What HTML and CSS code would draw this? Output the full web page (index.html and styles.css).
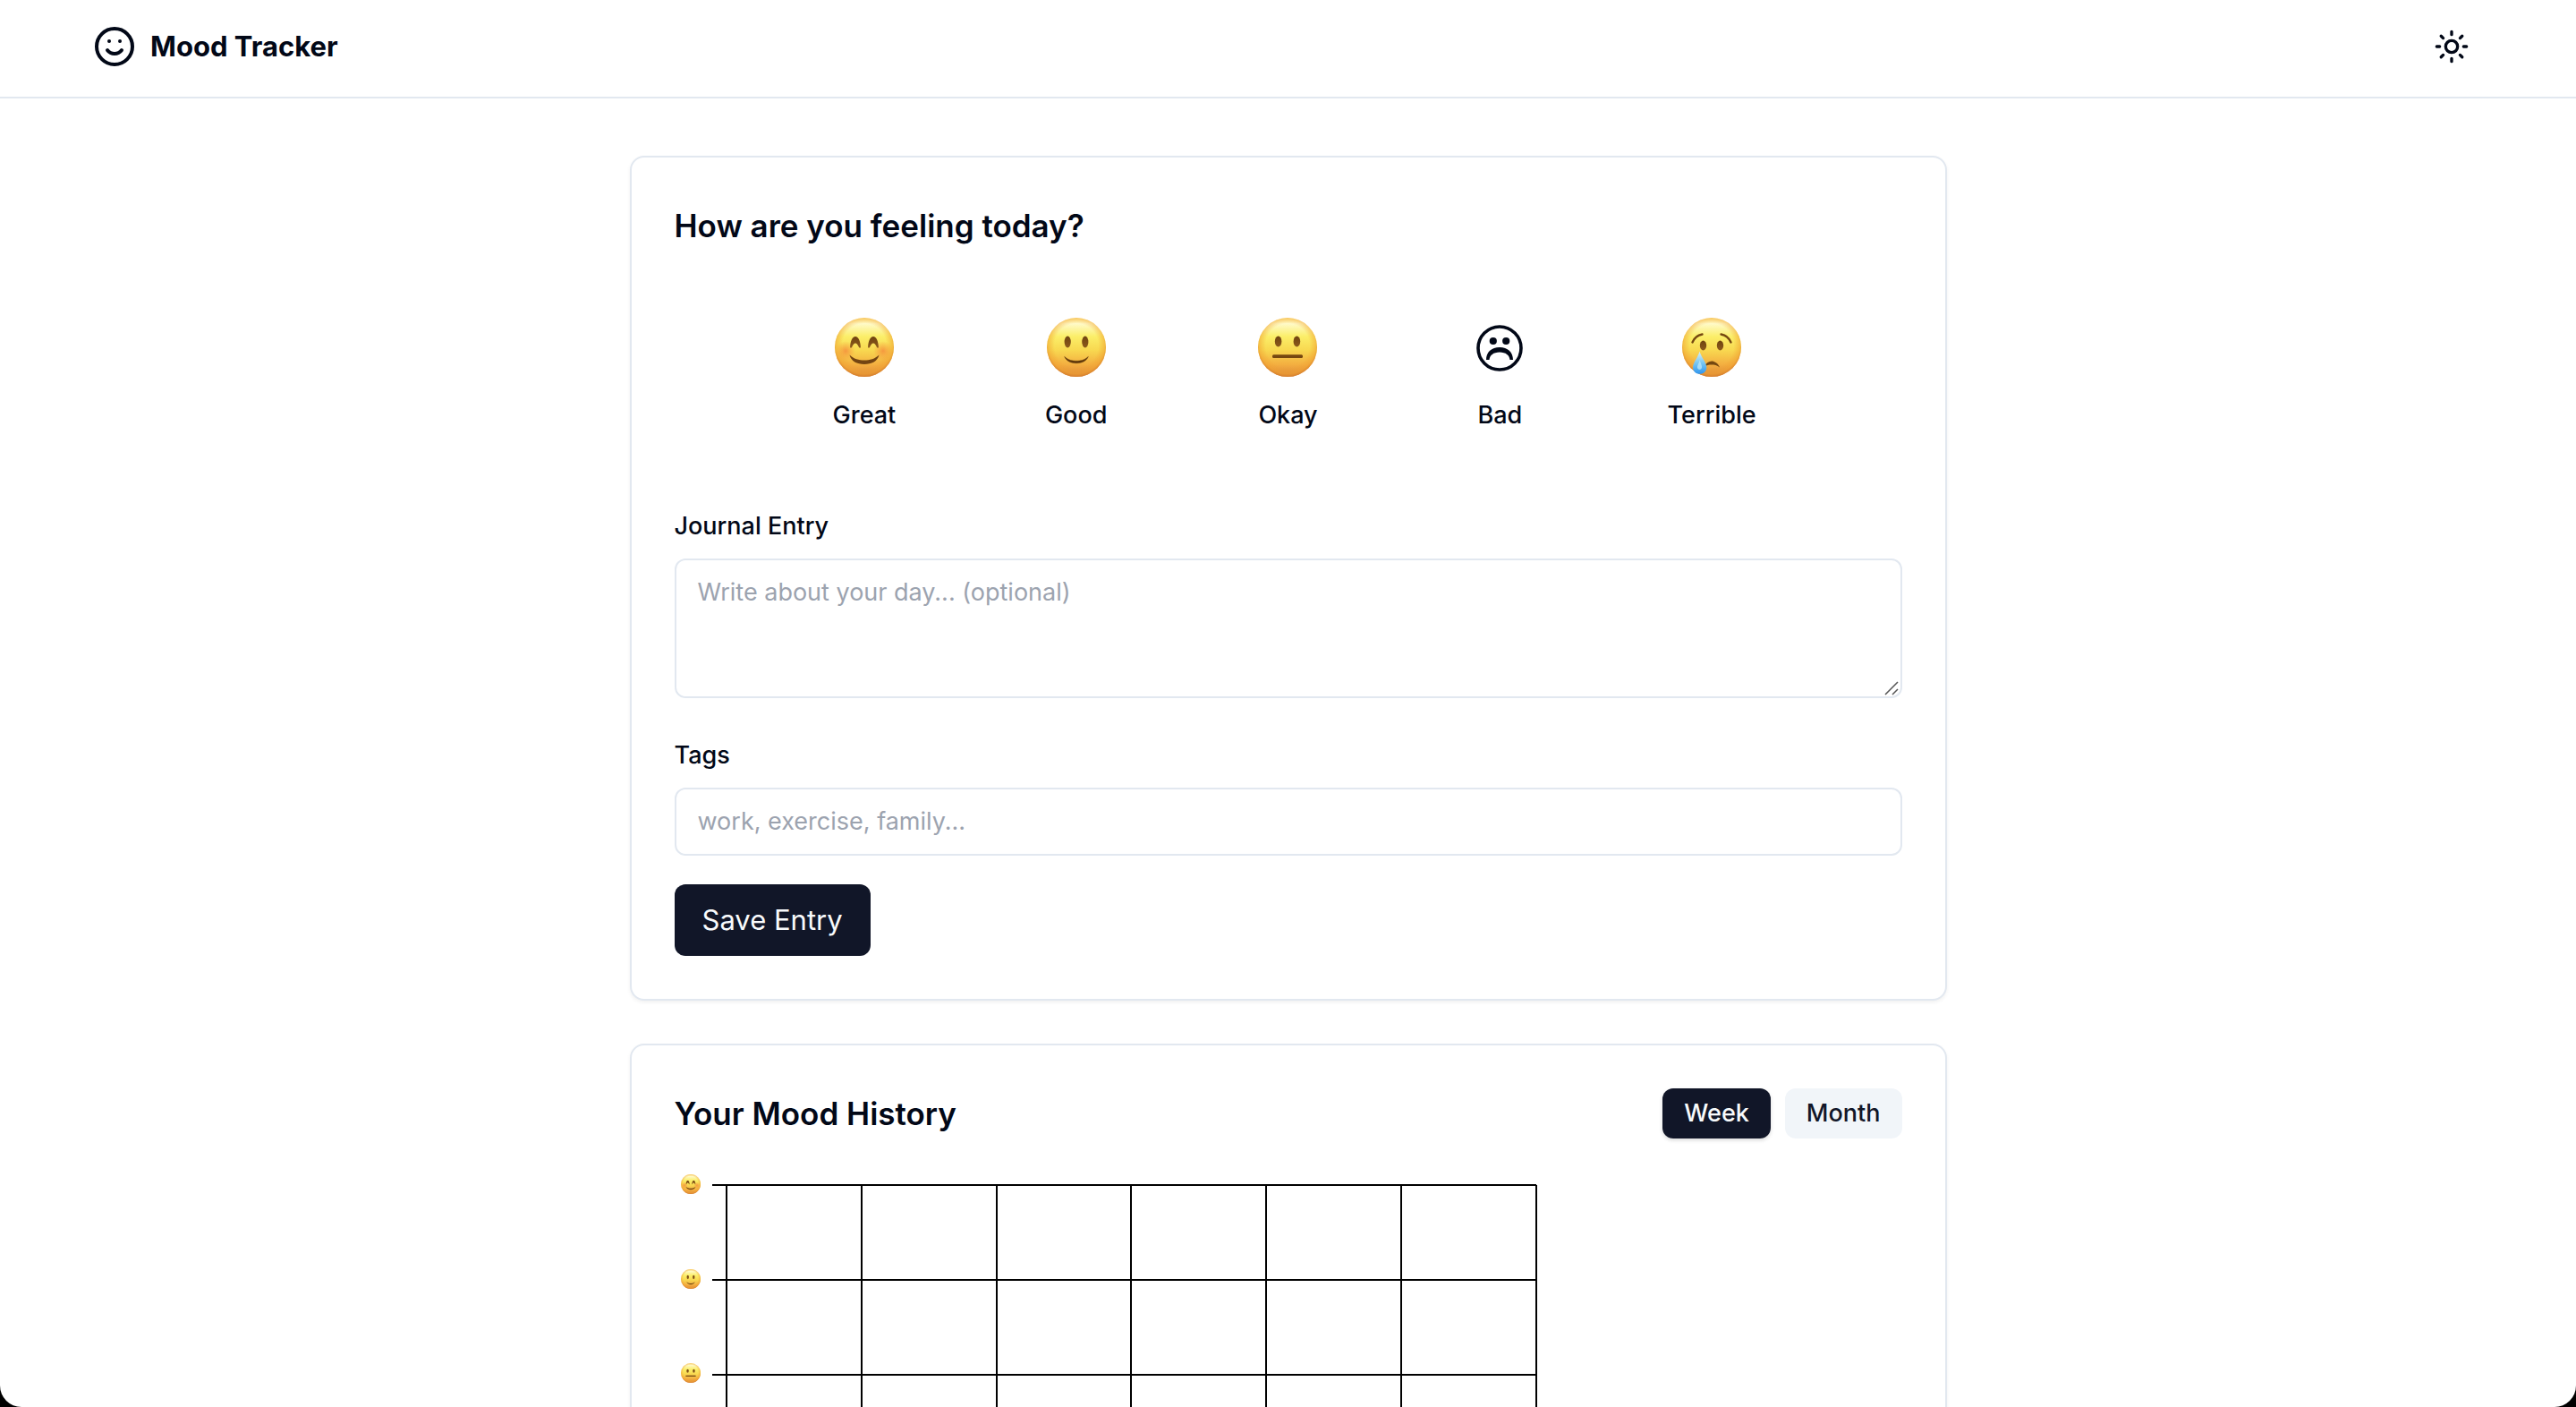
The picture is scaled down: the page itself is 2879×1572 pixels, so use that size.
FILE: index.html
```html
<!DOCTYPE html>
<html lang="en">
<head>
<meta charset="utf-8">
<meta name="viewport" content="width=device-width, initial-scale=1">
<title>Mood Tracker</title>
<link rel="stylesheet" href="styles.css">
</head>
<body>
<!-- Shared mood faces -->
<svg class="sprite" aria-hidden="true">
  <defs>
    <linearGradient id="skin" x1="0" y1="0" x2="0" y2="1">
      <stop offset="0" stop-color="#ffe98a"/>
      <stop offset=".1" stop-color="#fffac8"/>
      <stop offset=".32" stop-color="#fbee68"/>
      <stop offset=".55" stop-color="#f8d850"/>
      <stop offset=".8" stop-color="#f3ad40"/>
      <stop offset="1" stop-color="#d88438"/>
    </linearGradient>
    <radialGradient id="rim" cx=".5" cy=".47" r=".53">
      <stop offset=".7" stop-color="#f0a030" stop-opacity="0"/>
      <stop offset=".9" stop-color="#f0a030" stop-opacity=".5"/>
      <stop offset="1" stop-color="#d47c2c" stop-opacity=".9"/>
    </radialGradient>
    <radialGradient id="blush">
      <stop offset="0" stop-color="#f5843a" stop-opacity=".75"/>
      <stop offset="1" stop-color="#f5903a" stop-opacity="0"/>
    </radialGradient>
    <linearGradient id="ink" x1="0" y1="0" x2="0" y2="1">
      <stop offset="0" stop-color="#6f4310"/>
      <stop offset="1" stop-color="#8d5a1c"/>
    </linearGradient>
    <linearGradient id="tear" x1="0" y1="0" x2="0" y2="1">
      <stop offset="0" stop-color="#d8f2fb"/>
      <stop offset=".5" stop-color="#7cc8f2"/>
      <stop offset="1" stop-color="#2f95ee"/>
    </linearGradient>
    <symbol id="head" viewBox="-36 -36 72 72">
      <circle r="33" fill="url(#skin)"/>
      <circle r="33" fill="url(#rim)"/>
    </symbol>
    <symbol id="great" viewBox="-36 -36 72 72">
      <use href="#head" x="-36" y="-36" width="72" height="72"/>
      <circle cx="-21" cy="4" r="11" fill="url(#blush)"/>
      <circle cx="21" cy="4" r="11" fill="url(#blush)"/>
      <path d="M-15.9 0C-15.6-7-13.5-12-10-12S-4.4-7-4.1 0C-4.4 1-5.4 1-6 0-7.4-3-8.4-4.5-10-4.5S-12.6-3-14 0C-14.6 1-15.6 1-15.9 0Z" fill="url(#ink)"/>
      <path d="M4.1 0C4.4-7 6.5-12 10-12S15.6-7 15.9 0C15.6 1 14.6 1 14 0 12.6-3 11.6-4.5 10-4.5S7.4-3 6 0C5.4 1 4.4 1 4.1 0Z" fill="url(#ink)"/>
      <path d="M-16.5 8.5C-12 13-6 14.5 0 14.5S12 13 16.5 8.5C15 15.5 8 19 0 19S-15 15.5-16.5 8.5Z" fill="#734412"/>
    </symbol>
    <symbol id="good" viewBox="-36 -36 72 72">
      <use href="#head" x="-36" y="-36" width="72" height="72"/>
      <ellipse cx="-9.8" cy="-6" rx="3.6" ry="6.5" fill="url(#ink)"/>
      <ellipse cx="9.8" cy="-6" rx="3.6" ry="6.5" fill="url(#ink)"/>
      <path d="M-13.3 10.5C-9 14.5-4.5 15.3 0 15.3S9 14.5 13.3 10.5C11 15.5 6 17.7 0 17.7S-11 15.5-13.3 10.5Z" fill="#5f370b" stroke="#5f370b" stroke-width=".5"/>
    </symbol>
    <symbol id="okay" viewBox="-36 -36 72 72">
      <use href="#head" x="-36" y="-36" width="72" height="72"/>
      <ellipse cx="-10.4" cy="-6.5" rx="3.8" ry="6" fill="url(#ink)"/>
      <ellipse cx="10.4" cy="-6.5" rx="3.8" ry="6" fill="url(#ink)"/>
      <rect x="-17" y="8.3" width="34" height="3.8" rx="1.5" fill="#754710"/>
    </symbol>
    <symbol id="bad" viewBox="-36 -36 72 72">
      <circle cy="1" r="24" fill="none" stroke="currentColor" stroke-width="3.6"/>
      <circle cx="-7.2" cy="-7" r="4.1" fill="currentColor"/>
      <circle cx="7.2" cy="-7" r="4.1" fill="currentColor"/>
      <path d="M-15 14C-15 5.5-9 0 0 0S15 5.5 15 14H11.5C11 9 7 5.5 0 5.5S-11 9-11.5 14Z" fill="currentColor"/>
    </symbol>
    <symbol id="terrible" viewBox="-36 -36 72 72">
      <use href="#head" x="-36" y="-36" width="72" height="72"/>
      <ellipse cx="-9.5" cy="-2" rx="3.7" ry="5.4" fill="url(#ink)"/>
      <ellipse cx="9.5" cy="-2" rx="3.7" ry="5.4" fill="url(#ink)"/>
      <path d="M-21.5-5.5Q-18.5-13-10.5-14.5M21.5-5.5Q18.5-13 10.5-14.5" fill="none" stroke="#754710" stroke-width="2.4" stroke-linecap="round"/>
      <path d="M-9 22C-6 17.5-3 15.5 0 15.5S7 17.5 9 22.5C6 20 3 19.5 0 19.5S-6 20-9 22Z" fill="#754710"/>
      <path d="M-13.5 4.5C-12 10.5-5.7 17-5.7 22.5C-5.7 27-9 29.8-13.3 29.8S-21 27-21 22.5C-21 17-14.8 10.5-13.5 4.5Z" fill="url(#tear)"/>
      <path d="M-13.3 14C-12.5 18-10.5 20-11 23-12 25.5-15 25.5-16 23-16.3 20-14 18-13.3 14Z" fill="#c4ebfa" opacity=".7"/>
    </symbol>
  </defs>
</svg>

<header class="topbar">
  <div class="brand">
    <svg class="brand-icon" viewBox="0 0 24 24" aria-hidden="true"><circle cx="12" cy="12" r="10"/><path d="M8 14s1.5 2 4 2 4-2 4-2M9 9h.01M15 9h.01"/></svg>
    <h1 class="brand-name">Mood Tracker</h1>
  </div>
  <button class="theme-toggle" type="button" aria-label="Toggle theme">
    <svg class="theme-icon" viewBox="0 0 24 24" aria-hidden="true"><circle cx="12" cy="12" r="4"/><path d="M12 2v2M12 20v2M4.930 4.930l1.410 1.410M17.660 17.660l1.410 1.410M2 12h2M20 12h2M6.340 17.660l-1.410 1.410M19.070 4.930l-1.410 1.410"/></svg>
  </button>
</header>

<main class="page">
  <section class="card">
    <h2 class="card-title">How are you feeling today?</h2>
    <form class="entry-form">
      <div class="moods">
        <button class="mood" type="button"><svg class="face" aria-hidden="true"><use href="#great"/></svg>Great</button>
        <button class="mood" type="button"><svg class="face" aria-hidden="true"><use href="#good"/></svg>Good</button>
        <button class="mood" type="button"><svg class="face" aria-hidden="true"><use href="#okay"/></svg>Okay</button>
        <button class="mood" type="button"><svg class="face" aria-hidden="true"><use href="#bad"/></svg>Bad</button>
        <button class="mood" type="button"><svg class="face" aria-hidden="true"><use href="#terrible"/></svg>Terrible</button>
      </div>
      <div class="field">
        <label class="label" for="journal">Journal Entry</label>
        <div class="textarea-wrap">
          <textarea class="control textarea" id="journal" placeholder="Write about your day... (optional)"></textarea>
          <svg class="grip" viewBox="0 0 16 16" aria-hidden="true"><path d="M1 15 15 1M9 15l6-6"/></svg>
        </div>
      </div>
      <div class="field">
        <label class="label" for="tags">Tags</label>
        <input class="control" id="tags" type="text" placeholder="work, exercise, family...">
      </div>
      <button class="save" type="submit">Save Entry</button>
    </form>
  </section>

  <section class="card">
    <div class="card-head">
      <h2 class="card-title">Your Mood History</h2>
      <div class="ranges">
        <button class="range range-active" type="button">Week</button>
        <button class="range" type="button">Month</button>
      </div>
    </div>
    <svg class="chart" viewBox="0 0 1000 500" aria-hidden="true">
      <path class="grid" d="M42 20H963M42 126H963M42 232H963M42 338H963M42 444H963M58 20V444M209 20V444M360 20V444M510 20V444M661 20V444M812 20V444M963 20V444"/>
      <use href="#great" x="6" y="7" width="24" height="24"/>
      <use href="#good" x="6" y="113" width="24" height="24"/>
      <use href="#okay" x="6" y="218" width="24" height="24"/>
      <use href="#bad" x="6" y="325" width="24" height="24"/>
      <use href="#terrible" x="6" y="431" width="24" height="24"/>
    </svg>
  </section>
</main>
</body>
</html>
```
FILE: styles.css
```css
:root {
  --ink: #020817;
  --line: #e2e8f0;
  --primary: #111628;
  --secondary: #f1f5f9;
  --muted: #9ca3af;
}

*, *::before, *::after { box-sizing: border-box; }

body {
  margin: 0;
  background: #fff;
  color: var(--ink);
  font-family: Inter, "Liberation Sans", sans-serif;
  font-size: 27px;
  line-height: 40px;
}

/* Rounded lower corners of the app window */
body::after {
  content: "";
  position: fixed;
  inset: 0;
  border-radius: 0 0 24px 24px;
  box-shadow: 0 0 0 32px #000;
  pointer-events: none;
}

h1, h2 { margin: 0; }

button, input, textarea {
  font: inherit;
  color: inherit;
}

button {
  border: 0;
  background: none;
  cursor: pointer;
}

.sprite {
  position: absolute;
  width: 0;
  height: 0;
}

.topbar {
  display: flex;
  align-items: center;
  justify-content: space-between;
  padding: 28px 103px 32px 104px;
  border-bottom: 2px solid var(--line);
}

.brand {
  display: flex;
  align-items: center;
  gap: 16px;
}

.brand-icon, .theme-icon {
  display: block;
  fill: none;
  stroke: currentColor;
  stroke-width: 2;
  stroke-linecap: round;
  stroke-linejoin: round;
}

.brand-icon { width: 48px; height: 48px; }
.theme-icon { width: 40px; height: 40px; }

.brand-name {
  font-size: 31px;
  font-weight: 700;
  line-height: 48px;
}

.theme-toggle { padding: 4px 16px; }

.page {
  display: flex;
  flex-direction: column;
  gap: 48px;
  max-width: 1536px;
  margin: 0 auto;
  padding: 64px 32px;
}

.card {
  padding: 48px;
  border: 2px solid var(--line);
  border-radius: 16px;
  background: #fff;
  box-shadow: 0 2px 4px rgb(0 0 0 / 6%);
}

.card-head {
  display: flex;
  align-items: center;
  justify-content: space-between;
}

.card-title {
  font-size: 35px;
  font-weight: 600;
  line-height: 56px;
}

.moods {
  display: grid;
  grid-template-columns: repeat(5, 1fr);
  gap: 32px;
  max-width: 1152px;
  margin: 40px auto 52px;
}

.mood {
  display: flex;
  flex-direction: column;
  align-items: center;
  gap: 20px;
  padding: 32px 0;
  font-weight: 500;
}

.face {
  display: block;
  width: 72px;
  height: 72px;
}

.field {
  display: flex;
  flex-direction: column;
  gap: 16px;
  margin-bottom: 44px;
}

.field:last-of-type { margin-bottom: 32px; }

.label { font-weight: 500; }

.control {
  display: block;
  width: 100%;
  padding: 16px 24px;
  border: 2px solid var(--line);
  border-radius: 12px;
  background: #fff;
}

.control::placeholder { color: var(--muted); opacity: 1; }

.textarea-wrap { position: relative; }

.textarea {
  height: 156px;
  resize: vertical;
}

.textarea::-webkit-resizer { display: none; }

.grip {
  position: absolute;
  right: 4px;
  bottom: 3px;
  width: 16px;
  height: 16px;
  fill: none;
  stroke: #555;
  stroke-width: 1.5;
  pointer-events: none;
}

.save {
  padding: 16px 31px;
  border-radius: 12px;
  background: var(--primary);
  color: #f8fafc;
  font-size: 31px;
  line-height: 48px;
}

.ranges {
  display: flex;
  gap: 16px;
}

.range {
  padding: 8px 24px;
  border-radius: 12px;
  background: var(--secondary);
  color: var(--primary);
  font-weight: 500;
}

.range-active {
  background: var(--primary);
  color: #f8fafc;
  box-shadow: 0 2px 4px rgb(0 0 0 / 15%);
}

.chart {
  display: block;
  width: 1000px;
  max-width: 100%;
  margin-top: 32px;
}

.grid {
  fill: none;
  stroke: #000;
  stroke-width: 2;
  shape-rendering: crispEdges;
}
```
